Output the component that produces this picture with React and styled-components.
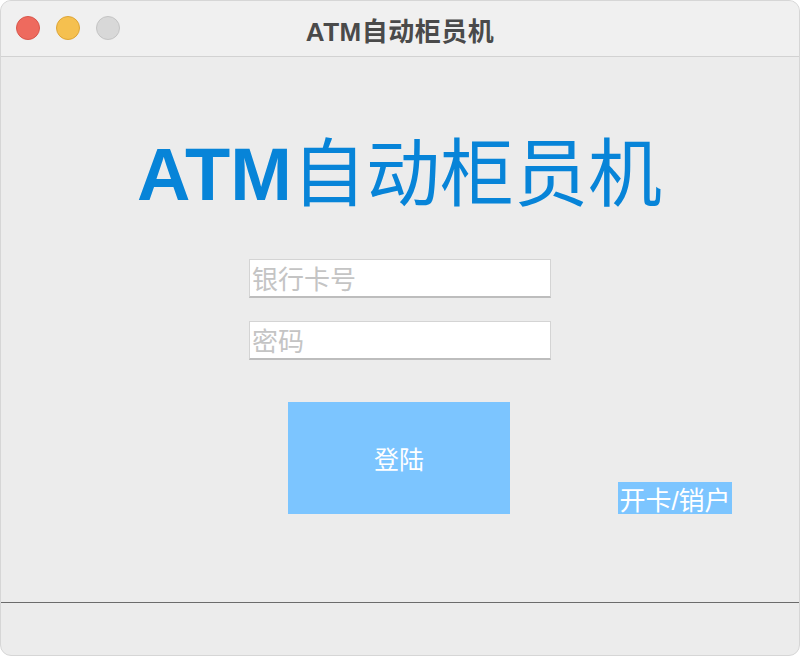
import React, { useState } from 'react';
import styled, { createGlobalStyle } from 'styled-components';

const GlobalStyle = createGlobalStyle`
  html, body {
    margin: 0;
    padding: 0;
    background: #ffffff;
  }
  body {
    font-family: "Liberation Sans", "Noto Sans CJK SC", sans-serif;
  }
`;

const App = () => {
  const [card, setCard] = useState('');
  const [password, setPassword] = useState('');

  return (
    <>
      <GlobalStyle />
      <Window>
        <TitleBar>
          <Lights>
            <Light color="#ee6a5e" edge="#d9564b" />
            <Light color="#f5c04f" edge="#dea536" />
            <Light color="#d8d8d8" edge="#c4c4c4" />
          </Lights>
          <WindowTitle>ATM自动柜员机</WindowTitle>
        </TitleBar>
        <Content>
          <Heading>
            <b>ATM</b>自动柜员机
          </Heading>
          <Form>
            <Field
              type="text"
              placeholder="银行卡号"
              value={card}
              autoFocus
              onChange={(e) => setCard(e.target.value)}
            />
            <Field
              type="password"
              placeholder="密码"
              value={password}
              onChange={(e) => setPassword(e.target.value)}
            />
          </Form>
          <ActionRow>
            <LoginButton type="button">登陆</LoginButton>
            <AccountLink>开卡/销户</AccountLink>
          </ActionRow>
        </Content>
        <StatusBar />
      </Window>
    </>
  );
};

export default App;

const Window = styled.div`
  width: 800px;
  height: 656px;
  box-sizing: border-box;
  border-radius: 11px;
  overflow: hidden;
  background-color: #ececec;
  border: 1px solid #d6d6d6;
  display: flex;
  flex-direction: column;
`;

const TitleBar = styled.div`
  position: relative;
  height: 55px;
  flex-shrink: 0;
  background-color: #f0f0f0;
  border-bottom: 1px solid #d2d2d2;
  display: flex;
  align-items: center;
  justify-content: center;
`;

const Lights = styled.div`
  position: absolute;
  left: 15px;
  top: 15px;
  display: flex;
  gap: 16px;
`;

const Light = styled.span`
  width: 24px;
  height: 24px;
  border-radius: 50%;
  box-sizing: border-box;
  background-color: ${(p) => p.color};
  border: 1px solid ${(p) => p.edge};
`;

const WindowTitle = styled.div`
  font-size: 26px;
  font-weight: bold;
  color: #4a4a4a;
  margin-top: 1px;
  letter-spacing: 0.5px;
`;

const Content = styled.div`
  flex: 1;
  display: flex;
  flex-direction: column;
  border-bottom: 1px solid #6b6b6b;
`;

const Heading = styled.h1`
  margin: 78px 0 0;
  text-align: center;
  font-size: 74px;
  line-height: 80px;
  font-weight: normal;
  color: #0784d8;
  padding-right: 1px;

  b {
    font-weight: bold;
  }
`;

const Form = styled.div`
  margin-top: 44px;
  display: flex;
  flex-direction: column;
  align-items: center;
  gap: 23px;
`;

const Field = styled.input`
  width: 302px;
  height: 39px;
  box-sizing: border-box;
  border: 1px solid #d4d4d4;
  border-bottom: 2px solid #bdbdbd;
  background: #ffffff;
  padding: 4px 0 0 2px;
  font-size: 26px;
  font-family: "Liberation Sans", "Noto Sans CJK SC", sans-serif;
  color: #222;
  outline: none;
  caret-color: #000;

  &::placeholder {
    color: #c4c4c4;
  }
`;

const ActionRow = styled.div`
  margin-top: 42px;
  padding-left: 287px;
  display: flex;
  align-items: flex-end;
  gap: 108px;
`;

const LoginButton = styled.button`
  width: 222px;
  height: 112px;
  border: none;
  background-color: #7cc5ff;
  color: #ffffff;
  font-size: 25px;
  font-family: "Liberation Sans", "Noto Sans CJK SC", sans-serif;
  padding: 0;
  cursor: pointer;
`;

const AccountLink = styled.span`
  width: 114px;
  height: 32px;
  display: flex;
  align-items: center;
  justify-content: center;
  background-color: #7cc5ff;
  color: #ffffff;
  font-size: 26px;
  white-space: nowrap;
  cursor: pointer;
`;

const StatusBar = styled.div`
  height: 52px;
  flex-shrink: 0;
`;
